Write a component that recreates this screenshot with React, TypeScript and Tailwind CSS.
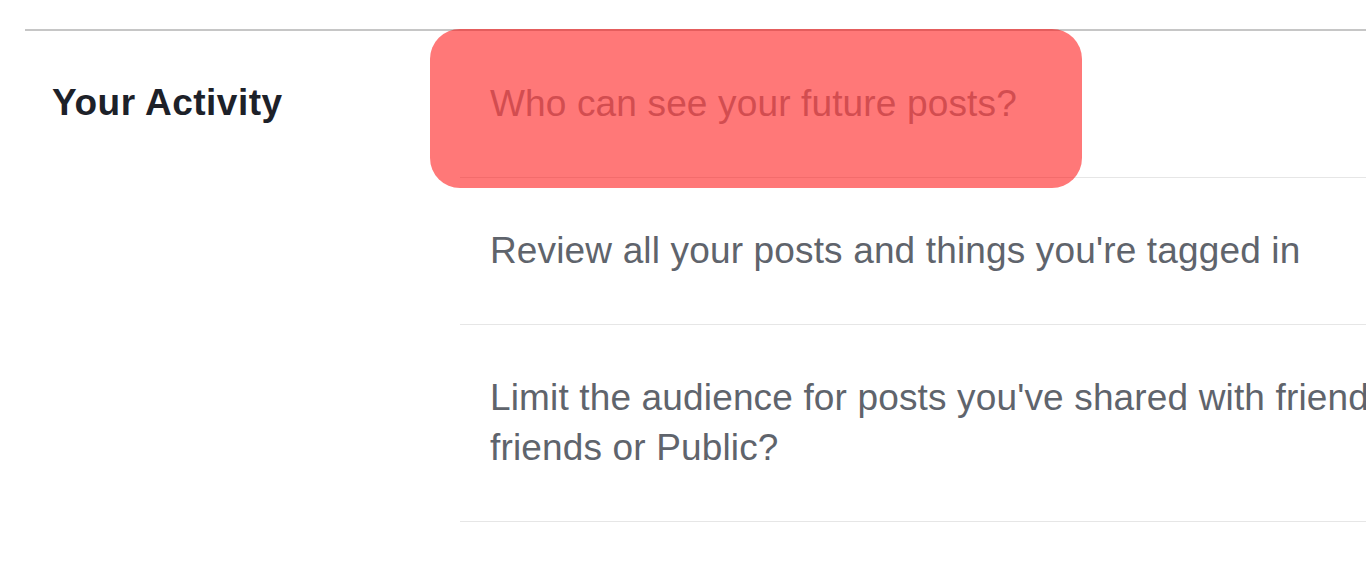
const rows = [
  { text: 'Who can see your future posts?', color: 'text-[#a0a4ab]' },
  { text: "Review all your posts and things you're tagged in", color: 'text-[#5f646c]' },
  { text: "Limit the audience for posts you've shared with friends of friends or Public?", color: 'text-[#5f646c]' },
]

export default function App() {
  return (
    <div className="relative h-[575px] w-full overflow-hidden bg-white pl-[25px] pt-[29px] font-['Liberation_Sans',Arial,sans-serif]">
      <div className="flex w-[1500px] border-t-2 border-[#c6c6c6]">
        <div className="w-[435px] shrink-0 pl-[27px] pt-[47px]">
          <h3 className="text-[37px] leading-[50px] font-bold tracking-[0.5px] text-[#1d2129]">Your Activity</h3>
        </div>
        <ul className="w-[1100px] shrink-0">
          {rows.map((r) => (
            <li key={r.text} className="border-b border-[#e6e6e6] py-[48px] pl-[30px]">
              <p className={`w-[1000px] text-[37px] leading-[50px] tracking-[0.15px] ${r.color}`}>{r.text}</p>
            </li>
          ))}
        </ul>
      </div>

      {/* highlight over the first setting */}
      <div className="absolute left-[430px] top-[29px] h-[159px] w-[652px] rounded-[30px] bg-[rgba(255,0,0,0.53)]" />
    </div>
  )
}
